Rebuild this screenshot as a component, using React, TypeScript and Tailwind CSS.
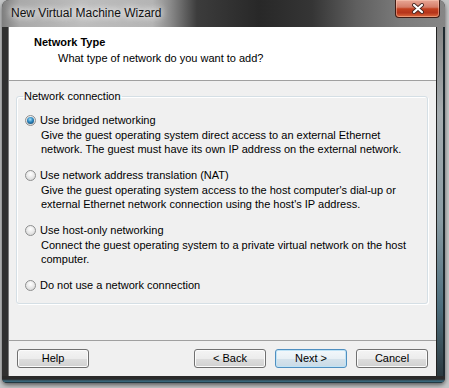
import React from "react";

const options = [
  {
    label: "Use bridged networking",
    desc: [
      "Give the guest operating system direct access to an external Ethernet",
      "network. The guest must have its own IP address on the external network.",
    ],
    checked: true,
  },
  {
    label: "Use network address translation (NAT)",
    desc: [
      "Give the guest operating system access to the host computer's dial-up or",
      "external Ethernet network connection using the host's IP address.",
    ],
  },
  {
    label: "Use host-only networking",
    desc: [
      "Connect the guest operating system to a private virtual network on the host",
      "computer.",
    ],
  },
  { label: "Do not use a network connection", desc: [] },
];

const Radio = ({ checked }: { checked?: boolean }) => (
  <span className="w-[11px] h-[11px] shrink-0 rounded-full border border-[#8e8f8f] bg-[radial-gradient(circle_at_50%_35%,#ffffff_0%,#e6e6e6_55%,#cfcfcf_100%)] flex items-center justify-center">
    {checked && (
      <span className="w-[7px] h-[7px] rounded-full bg-[radial-gradient(circle_at_45%_35%,#a6e0f8_0%,#2c86bf_45%,#0c3454_100%)]" />
    )}
  </span>
);

const Button = ({ label, primary }: { label: string; primary?: boolean }) => (
  <button
    className={
      primary
        ? "w-[72px] h-[19px] rounded-[3px] border border-[#4f8fc0] bg-[linear-gradient(#f3f8fb_0%,#e8f0f5_50%,#d6e3ec_50%,#c9dae6_100%)] shadow-[inset_0_0_0_1px_#bfe3f6] text-[11px] leading-[17px] text-black"
        : "w-[72px] h-[19px] rounded-[3px] border border-[#707070] bg-[linear-gradient(#f4f4f4_0%,#ececec_50%,#dedede_50%,#d0d0d0_100%)] shadow-[inset_0_0_0_1px_#fbfbfb] text-[11px] leading-[17px] text-black"
    }
  >
    {label}
  </button>
);

export default function App() {
  return (
    <div className="w-[449px] h-[388px] overflow-hidden bg-[#c4c6c7] font-['Liberation_Sans',Arial,sans-serif] text-black">
      <div className="ml-[2px] w-[443px] h-[383px] flex flex-col rounded-t-[7px] rounded-b-[5px] bg-[#2e2e2e] shadow-[0_2px_4px_rgba(0,0,0,0.55)] overflow-hidden">
        {/* title bar */}
        <div className="h-[27px] shrink-0 flex items-start justify-between bg-[linear-gradient(90deg,#7e7e7e_0%,#a9a9a9_4%,#bdbdbd_18%,#b4b4b4_34%,#8a8a8a_38%,#3c3c3c_44%,#282828_58%,#353535_70%,#5f5f5f_80%,#7b7b7b_90%,#868686_100%)]">
          <span className="pl-[9px] pt-[5px] text-[12px] leading-[16px] text-[#111] [text-shadow:0_0_6px_#fff,0_0_10px_#fff]">
            New Virtual Machine Wizard
          </span>
          <button className="mr-[5px] w-[45px] h-[18px] rounded-b-[4px] border border-t-0 border-[#3f1b14] bg-[linear-gradient(#e8a796_0%,#d57d68_42%,#c2401f_52%,#b5341b_75%,#de6b3e_100%)] shadow-[inset_0_0_0_1px_rgba(255,210,190,0.45)] flex items-center justify-center">
            <svg width="14" height="11" viewBox="0 0 14 11">
              <path d="M3 2 L11 9 M11 2 L3 9" stroke="#4a2a24" strokeWidth="4" strokeLinecap="round" />
              <path d="M3 2 L11 9 M11 2 L3 9" stroke="#ffffff" strokeWidth="2.2" strokeLinecap="round" />
            </svg>
          </button>
        </div>

        <div className="flex flex-1">
          {/* left frame */}
          <div className="w-[7px] bg-[#303030] border-r border-[#7a7a7a]" />

          {/* client area */}
          <div className="w-[427px] flex flex-col bg-[#f0f0f0]">
            <div className="h-[54px] shrink-0 bg-white border-b border-[#a0a0a0] pl-[25px] pt-[8px]">
              <div className="text-[11px] leading-[14px] font-bold">Network Type</div>
              <div className="mt-[2px] ml-[24px] text-[11px] leading-[14px]">
                What type of network do you want to add?
              </div>
            </div>

            <div className="flex-1 pt-[7px] pl-[7px] pr-[8px]">
              <fieldset className="border border-[#d5dfe5] rounded-[3px] pl-[8px] pt-[8px] pb-[10px] shadow-[inset_1px_1px_0_#fff,1px_1px_0_#fff]">
                <legend className="ml-[-2px] px-[1px] text-[11px] leading-[16px]">Network connection</legend>
                <div className="flex flex-col gap-[11px]">
                  {options.map((o) => (
                    <div key={o.label}>
                      <div className="h-[16px] flex items-center gap-[4px]">
                        <Radio checked={o.checked} />
                        <span className="text-[11px] whitespace-nowrap">{o.label}</span>
                      </div>
                      {o.desc.length > 0 && (
                        <div className="pl-[16px] text-[11px] leading-[14px] whitespace-nowrap">
                          {o.desc.map((d) => (
                            <div key={d}>{d}</div>
                          ))}
                        </div>
                      )}
                    </div>
                  ))}
                </div>
              </fieldset>
            </div>

            <div className="h-[36px] shrink-0 border-t border-[#a0a0a0] flex items-start pt-[8px] px-[8px]">
              <Button label="Help" />
              <div className="flex-1" />
              <div className="flex gap-[9px]">
                <Button label="< Back" />
                <Button label="Next >" primary />
                <Button label="Cancel" />
              </div>
            </div>
          </div>

          {/* right frame */}
          <div className="w-[9px] border-l border-[#222] border-r-2 border-r-[#1f2a30] bg-[linear-gradient(#858585_0%,#a6adb0_25%,#8a9ca4_55%,#4d6f7e_80%,#2c3a40_100%)]" />
        </div>

        {/* bottom frame */}
        <div className="h-[7px] shrink-0 bg-[linear-gradient(#2a2a2a_0%,#2a2a2a_45%,#3d7187_75%,#1a2429_100%)]" />
      </div>
    </div>
  );
}
